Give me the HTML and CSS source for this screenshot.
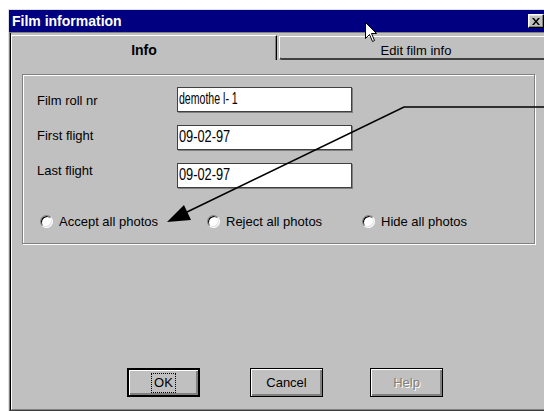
FILE: index.html
```html
<!DOCTYPE html>
<html lang="en">
<head>
<meta charset="utf-8">
<title>Film information</title>
<link rel="stylesheet" href="styles.css">
</head>
<body>
<div class="window">
  <div class="titlebar">
    <span class="title">Film information</span>
    <button class="close" aria-label="Close">
      <svg width="8" height="7" viewBox="0 0 8 7"><path d="M0 0h2l2 2.5L6 0h2L5 3.5 8 7H6L4 4.5 2 7H0l3-3.5z" fill="#000"/></svg>
    </button>
  </div>
  <div class="frame">
    <div class="tabstrip">
      <div class="tab tab-active">Info</div>
      <div class="tab tab-idle">Edit film info</div>
    </div>
    <div class="panel">
      <div class="group">
        <div class="fields">
          <div class="labels">
            <span>Film roll nr</span>
            <span>First flight</span>
            <span>Last flight</span>
          </div>
          <div class="inputs">
            <div class="field"><span class="value value-text">demothe l- 1</span></div>
            <div class="field"><span class="value">09-02-97</span></div>
            <div class="field"><span class="value">09-02-97</span></div>
          </div>
        </div>
        <div class="choices">
          <label class="choice"><span class="radio"></span>Accept all photos</label>
          <label class="choice"><span class="radio"></span>Reject all photos</label>
          <label class="choice"><span class="radio"></span>Hide all photos</label>
        </div>
      </div>
      <div class="buttons">
        <button class="btn btn-default"><span class="focus">OK</span></button>
        <button class="btn">Cancel</button>
        <button class="btn" disabled>Help</button>
      </div>
    </div>
  </div>
</div>

<!-- callout arrow pointing at the photo options -->
<svg class="callout" width="544" height="411" viewBox="0 0 544 411">
  <polyline points="548,107 404,107 187,212" fill="none" stroke="#000" stroke-width="1.6"/>
  <polygon points="167,222 184,205 191,220" fill="#000"/>
</svg>

<!-- mouse pointer -->
<svg class="pointer" width="13" height="21" viewBox="0 0 13 21">
  <path d="M0.5 0.5V16.5L4.5 12.5L7.5 19.5L9.5 18.5L6.5 11.5H11.5Z" fill="#fff" stroke="#000" stroke-width="1"/>
</svg>
</body>
</html>
```

FILE: styles.css
```css
* {
  box-sizing: border-box;
}

html,
body {
  margin: 0;
}

body {
  position: relative;
  width: 544px;
  height: 411px;
  overflow: hidden;
  background: #fff;
  font-family: "Liberation Sans", Arial, sans-serif;
  font-size: 13px;
  color: #000;
}

/* dialog window */
.window {
  margin: 9px 0 0 8px;
  width: 536px;
  height: 402px;
  border-top: 1px solid #dfdfdf;
  border-left: 1px solid #dfdfdf;
  background: #c0c0c0;
  display: flex;
  flex-direction: column;
}

.titlebar {
  flex: 0 0 22px;
  display: flex;
  align-items: center;
  justify-content: space-between;
  padding-left: 3px;
  background: #000080;
  color: #fff;
  font-weight: bold;
  font-size: 14px;
}

.close {
  width: 16px;
  height: 14px;
  padding: 0;
  display: flex;
  align-items: center;
  justify-content: center;
  background: #c0c0c0;
  border: 1px solid;
  border-color: #fff #000 #000 #fff;
  box-shadow: inset -1px -1px 0 #808080, inset 1px 1px 0 #dfdfdf;
}

.frame {
  flex: 1;
  display: flex;
  flex-direction: column;
  padding-left: 1px;
  border-top: 1px solid #808080;
  border-left: 1px solid #808080;
  border-bottom: 1px solid #404040;
  box-shadow: inset 1px 0 0 #000;
}

/* tabs */
.tabstrip {
  flex: 0 0 27px;
  display: flex;
  align-items: flex-end;
}

.tab {
  flex: none;
  text-align: center;
  padding-top: 6px;
}

.tab-active {
  width: 266px;
  height: 25px;
  border-top: 1px solid #fff;
  border-left: 1px solid #fff;
  border-right: 1px solid #000;
  box-shadow: inset -1px 0 0 #808080;
  font-weight: bold;
  font-size: 14px;
  line-height: 16px;
}

.tab-idle {
  margin-left: 2px;
  width: 273px;
  height: 24px;
  border-top: 1px solid #fff;
  border-left: 1px solid #fff;
  border-bottom: 2px solid #404040;
  border-bottom-left-radius: 3px;
  line-height: 15px;
}

.panel {
  flex: 1;
  border-left: 1px solid #fff;
  border-bottom: 1px solid #808080;
  padding: 14px 0 0 10px;
}

/* etched group box */
.group {
  width: 513px;
  height: 170px;
  border: 1px solid #808080;
  box-shadow: inset 1px 1px 0 #fff, 1px 1px 0 #fff;
  padding: 12px 0 0 14px;
}

.fields {
  display: flex;
}

.labels {
  width: 140px;
  padding-top: 6px;
  display: flex;
  flex-direction: column;
  gap: 20px;
  line-height: 15px;
}

.inputs {
  display: flex;
  flex-direction: column;
  gap: 13px;
}

.field {
  width: 175px;
  height: 25px;
  padding: 2px 0 0 1px;
  background: #fff;
  border: 1px solid #404040;
  box-shadow: 1px 1px 0 #808080;
  font-size: 16px;
  line-height: 18px;
  white-space: nowrap;
  overflow: hidden;
}

.value {
  display: inline-block;
  transform-origin: 0 0;
  transform: scaleX(0.8);
}

.value-text {
  transform: scaleX(0.66);
}

/* radio buttons */
.choices {
  display: grid;
  grid-template-columns: 167px 155px auto;
  margin-top: 26px;
  padding-left: 3px;
  line-height: 15px;
}

.choice {
  display: flex;
  align-items: center;
  gap: 6px;
}

.radio {
  flex: none;
  width: 13px;
  height: 13px;
  border-radius: 50%;
  background: #fff;
  border: 1px solid;
  border-color: #808080 #fff #fff #808080;
  box-shadow: inset 1px 1px 0 #000, inset -1px -1px 0 #dfdfdf;
}

/* push buttons */
.buttons {
  display: grid;
  grid-template-columns: 123px 120px 73px;
  margin-top: 124px;
  padding-left: 105px;
}

.btn {
  width: 73px;
  height: 29px;
  padding: 0;
  background: #c0c0c0;
  border: 1px solid #000;
  box-shadow: inset 1px 1px 0 #fff, inset -2px -2px 0 #808080;
  font-family: "Liberation Sans", Arial, sans-serif;
  font-size: 13px;
  color: #000;
}

.btn-default {
  border-width: 2px;
}

.btn:disabled {
  color: #808080;
  text-shadow: 1px 1px 0 #fff;
}

.focus {
  display: inline-block;
  padding: 1px 2px;
  line-height: 16px;
  outline: 1px dotted #000;
}

/* overlays */
.callout {
  position: absolute;
  left: 0;
  top: 0;
  pointer-events: none;
}

.pointer {
  position: absolute;
  left: 365px;
  top: 22px;
  pointer-events: none;
}
```
